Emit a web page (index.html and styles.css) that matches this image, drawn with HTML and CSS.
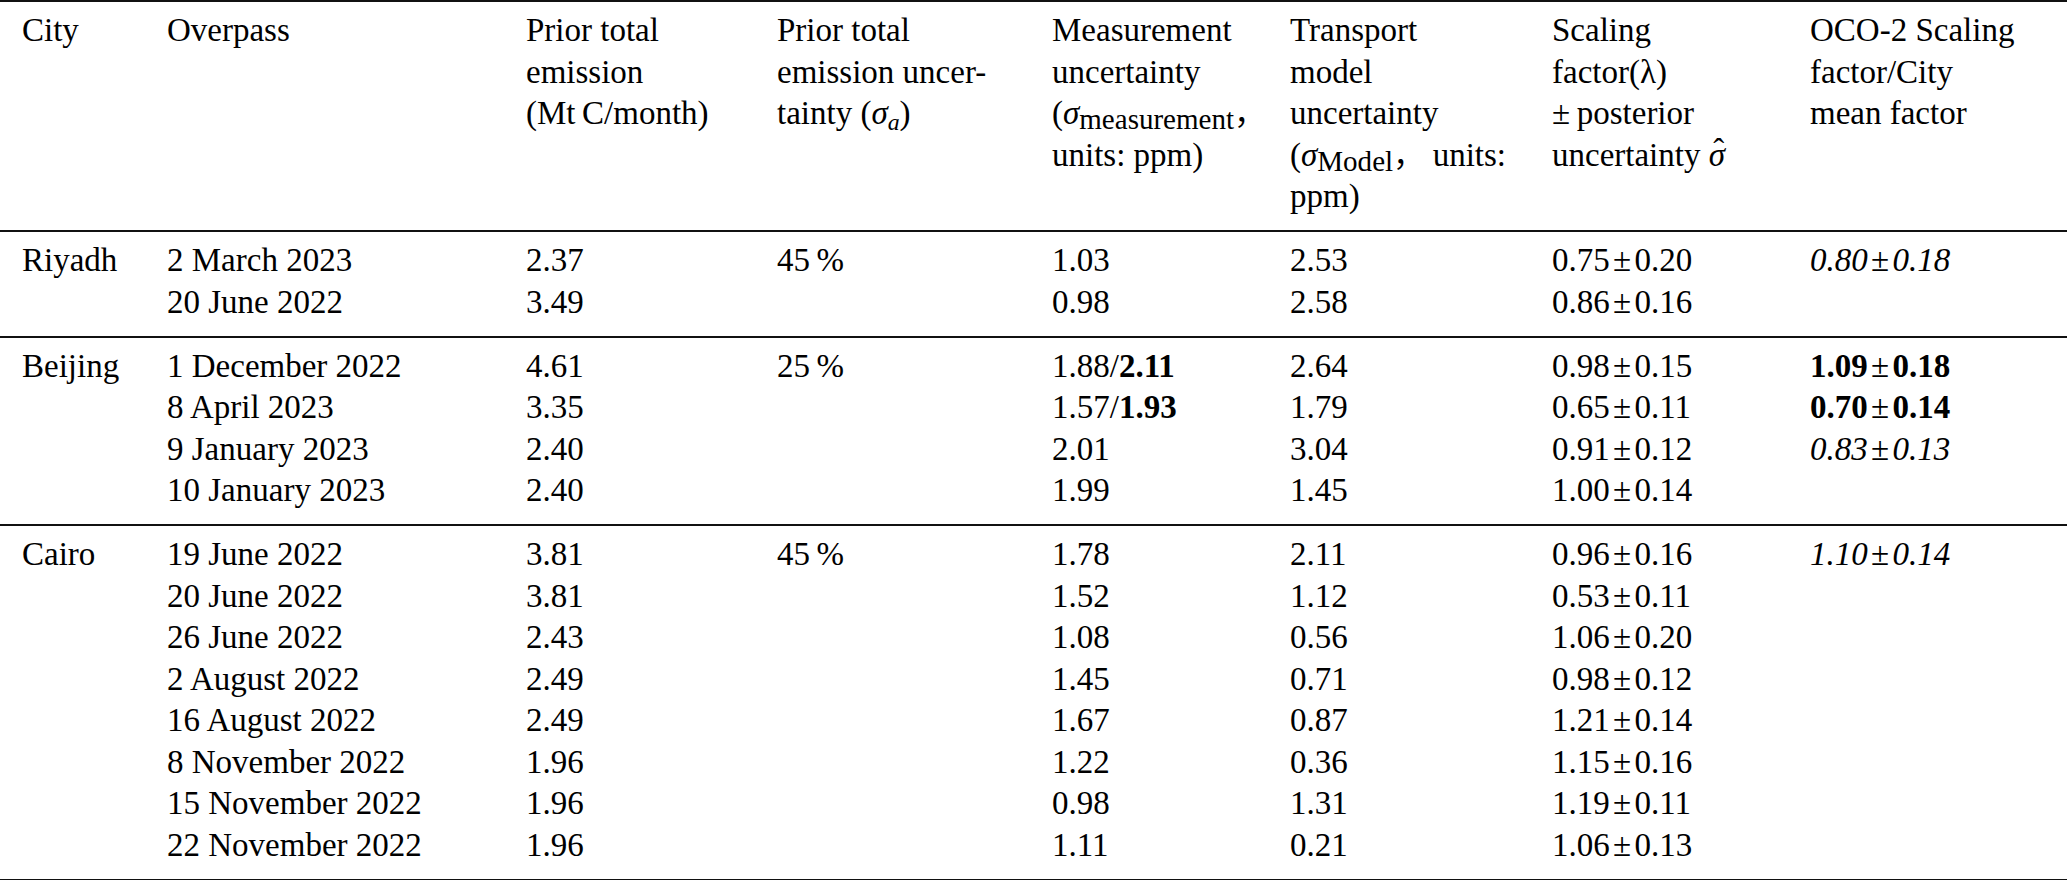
FILE: index.html
```html
<!DOCTYPE html>
<html lang="en">
<head>
<meta charset="utf-8">
<title>Scaling factors by city</title>
<link rel="stylesheet" href="styles.css">
</head>
<body>
<div class="tbl">
  <div class="grp head">
    <div class="c">City</div>
    <div class="c">Overpass</div>
    <div class="c">Prior total<br>emission<br>(Mt&#8201;C/month)</div>
    <div class="c">Prior total<br>emission uncer-<br>tainty (<span class="m">σ<sub class="it">a</sub></span>)</div>
    <div class="c">Measurement<br>uncertainty<br>(<span class="m">σ</span><sub>measurement</sub><span class="fw">，</span><br>units: ppm)</div>
    <div class="c">Transport<br>model<br>uncertainty<br>(<span class="m">σ</span><sub>Model</sub><span class="fw">，</span> units:<br>ppm)</div>
    <div class="c">Scaling<br>factor(λ)<br>±&#8201;posterior<br>uncertainty <span class="hat">σ</span></div>
    <div class="c">OCO-2 Scaling<br>factor/City<br>mean factor</div>
  </div>

  <div class="grp">
    <div class="c">Riyadh</div>
    <div class="c">2 March 2023<br>20 June 2022</div>
    <div class="c">2.37<br>3.49</div>
    <div class="c">45&#8201;%</div>
    <div class="c">1.03<br>0.98</div>
    <div class="c">2.53<br>2.58</div>
    <div class="c">0.75<span class="pm">±</span>0.20<br>0.86<span class="pm">±</span>0.16</div>
    <div class="c"><i>0.80</i><span class="pm">±</span><i>0.18</i></div>
  </div>

  <div class="grp">
    <div class="c">Beijing</div>
    <div class="c">1 December 2022<br>8 April 2023<br>9 January 2023<br>10 January 2023</div>
    <div class="c">4.61<br>3.35<br>2.40<br>2.40</div>
    <div class="c">25&#8201;%</div>
    <div class="c">1.88/<b>2.11</b><br>1.57/<b>1.93</b><br>2.01<br>1.99</div>
    <div class="c">2.64<br>1.79<br>3.04<br>1.45</div>
    <div class="c">0.98<span class="pm">±</span>0.15<br>0.65<span class="pm">±</span>0.11<br>0.91<span class="pm">±</span>0.12<br>1.00<span class="pm">±</span>0.14</div>
    <div class="c"><b>1.09</b><span class="pm">±</span><b>0.18</b><br><b>0.70</b><span class="pm">±</span><b>0.14</b><br><i>0.83</i><span class="pm">±</span><i>0.13</i></div>
  </div>

  <div class="grp">
    <div class="c">Cairo</div>
    <div class="c">19 June 2022<br>20 June 2022<br>26 June 2022<br>2 August 2022<br>16 August 2022<br>8 November 2022<br>15 November 2022<br>22 November 2022</div>
    <div class="c">3.81<br>3.81<br>2.43<br>2.49<br>2.49<br>1.96<br>1.96<br>1.96</div>
    <div class="c">45&#8201;%</div>
    <div class="c">1.78<br>1.52<br>1.08<br>1.45<br>1.67<br>1.22<br>0.98<br>1.11</div>
    <div class="c">2.11<br>1.12<br>0.56<br>0.71<br>0.87<br>0.36<br>1.31<br>0.21</div>
    <div class="c">0.96<span class="pm">±</span>0.16<br>0.53<span class="pm">±</span>0.11<br>1.06<span class="pm">±</span>0.20<br>0.98<span class="pm">±</span>0.12<br>1.21<span class="pm">±</span>0.14<br>1.15<span class="pm">±</span>0.16<br>1.19<span class="pm">±</span>0.11<br>1.06<span class="pm">±</span>0.13</div>
    <div class="c"><i>1.10</i><span class="pm">±</span><i>0.14</i></div>
  </div>
</div>
</body>
</html>
```

FILE: styles.css
```css
html, body {
  margin: 0;
  padding: 0;
  background: #ffffff;
}

body {
  color: #000000;
  font-family: "Liberation Serif", "Times New Roman", Times, "DejaVu Serif", serif;
  font-size: 33px;
}

.tbl {
  width: 2067px;
  border-top: 2px solid #111111;
}

.grp {
  display: grid;
  grid-template-columns: 145px 359px 251px 275px 238px 262px 258px 1fr;
  padding: 8px 0 12.5px 22px;
  line-height: 41.5px;
  border-bottom: 2px solid #111111;
  white-space: nowrap;
}

.c {
  min-width: 0;
}

.m {
  font-style: italic;
}

sub {
  font-size: 0.88em;
  line-height: 0;
  vertical-align: -0.16em;
  font-style: normal;
}

sub.it {
  font-size: 0.72em;
  vertical-align: -0.25em;
  font-style: italic;
}

.fw {
  font-family: "Noto Sans CJK SC", "Noto Sans CJK JP", sans-serif;
  font-size: 0.95em;
  line-height: 0;
}

.hat {
  position: relative;
  display: inline-block;
  font-style: italic;
  line-height: 1;
}

.hat::after {
  content: "ˆ";
  position: absolute;
  left: 0.14em;
  top: -0.1em;
  font-style: normal;
}

.pm {
  margin: 0 0.1em;
  font-weight: normal;
  font-style: normal;
}

b {
  font-weight: bold;
}

i {
  font-style: italic;
}
```
